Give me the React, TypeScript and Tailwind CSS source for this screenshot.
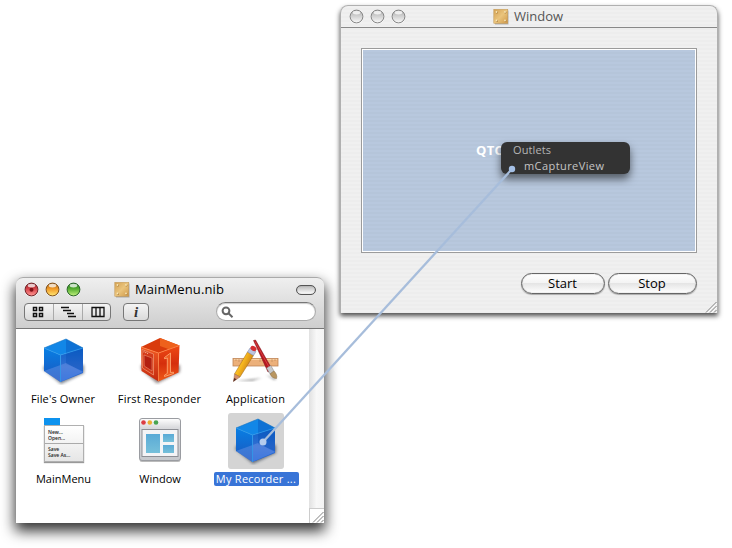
import React from "react";

const font = "font-['Open_Sans','Noto_Sans',sans-serif]";

function NibIcon({ className = "" }: { className?: string }) {
  return (
    <svg className={className} width="16" height="16" viewBox="0 0 16 16">
      <defs>
        <linearGradient id="nib" x1="0" y1="0" x2="1" y2="1">
          <stop offset="0" stopColor="#d3a052" />
          <stop offset="0.5" stopColor="#eac47c" />
          <stop offset="1" stopColor="#cf9848" />
        </linearGradient>
      </defs>
      <rect x="2" y="1.5" width="13.5" height="14" fill="#000" opacity=".25" />
      <rect x="0.8" y="0.3" width="14" height="14" fill="url(#nib)" stroke="#c09552" strokeWidth=".5" />
      {[3.5, 12].map((x) =>
        [3, 11.5].map((y) => (
          <g key={`${x}-${y}`}>
            <circle cx={x + 0.4} cy={y + 0.5} r="1.1" fill="#a97a38" />
            <circle cx={x} cy={y} r=".9" fill="#fbe9b8" />
          </g>
        ))
      )}
    </svg>
  );
}

function Light({ id, top, mid, low, edge, dot }: { id: string; top: string; mid: string; low: string; edge: string; dot?: boolean }) {
  return (
    <svg width="15" height="15" viewBox="0 0 15 15" className="block">
      <defs>
        <linearGradient id={id} x1="0" y1="0" x2="0" y2="1">
          <stop offset="0" stopColor={top} />
          <stop offset=".45" stopColor={mid} />
          <stop offset="1" stopColor={low} />
        </linearGradient>
      </defs>
      <circle cx="7.5" cy="8" r="6.8" fill="#fff" opacity=".8" />
      <circle cx="7.5" cy="7.5" r="6.4" fill={`url(#${id})`} stroke={edge} strokeWidth="1" />
      <ellipse cx="7.5" cy="3.6" rx="3.8" ry="1.9" fill="#fff" opacity=".75" />
      {dot && <circle cx="7.5" cy="7.7" r="2" fill="#7f1016" />}
    </svg>
  );
}

function Grip() {
  return (
    <svg width="12" height="12" viewBox="0 0 12 12" className="block">
      <path d="M1 11.5 11.5 1M5 11.5 11.5 5M9 11.5 11.5 9" stroke="#7c7c7c" strokeWidth="1" />
      <path d="M2.2 11.7 11.7 2.2M6.2 11.7 11.7 6.2" stroke="#fff" strokeWidth=".8" />
    </svg>
  );
}

function BlueCube() {
  return (
    <svg width="48" height="48" viewBox="0 0 48 48">
      <defs>
        <linearGradient id="bl" x1="0" y1="0" x2="0" y2="1">
          <stop offset="0" stopColor="#087fe4" />
          <stop offset="1" stopColor="#1b55bd" />
        </linearGradient>
        <linearGradient id="br" x1="0" y1="0" x2="0" y2="1">
          <stop offset="0" stopColor="#0b62ca" />
          <stop offset=".55" stopColor="#336fd2" />
          <stop offset="1" stopColor="#1761d8" />
        </linearGradient>
        <filter id="bs" x="-20%" y="-20%" width="140%" height="140%"><feGaussianBlur stdDeviation="1.6" /></filter>
      </defs>
      <path d="M3 32 21 47 44 36V28H5z" fill="#263342" opacity=".6" filter="url(#bs)" />
      <path d="M4 11 26 2 43 11 20.500 18z" fill="#1287e7" />
      <path d="M4 11 20.500 18V45L4 34z" fill="url(#bl)" />
      <path d="M20.500 18 43 11V36L20.500 45z" fill="url(#br)" />
      <path d="M26 2 43 11V34L26 27z" fill="#0750b5" opacity=".38" />
      <path d="M4 34 26 26 43 35 20.500 45z" fill="#7d9fea" opacity=".38" />
      <path d="M4 11 20.500 18V45M20.500 18 43 11" fill="none" stroke="#2c9aec" strokeWidth=".8" />
      <path d="M4 11 26 2 43 11" fill="none" stroke="#1674c3" strokeWidth=".6" />
    </svg>
  );
}

function RedCube() {
  return (
    <svg width="48" height="48" viewBox="0 0 48 48">
      <defs>
        <linearGradient id="rl" x1="0" y1="0" x2="0" y2="1">
          <stop offset="0" stopColor="#f05a23" />
          <stop offset="1" stopColor="#c42a10" />
        </linearGradient>
        <linearGradient id="rr" x1="0" y1="0" x2="0" y2="1">
          <stop offset="0" stopColor="#ee4a14" />
          <stop offset=".5" stopColor="#d52f0c" />
          <stop offset="1" stopColor="#ef5a18" />
        </linearGradient>
        <filter id="rs" x="-20%" y="-20%" width="140%" height="140%"><feGaussianBlur stdDeviation="1.4" /></filter>
      </defs>
      <path d="M5 32 21 46.500 44 35V28H5z" fill="#3a2421" opacity=".55" filter="url(#rs)" />
      <path d="M5 10 24 1 43.500 8.500 22.500 16z" fill="#d93b0c" />
      <path d="M24 1 43.500 8.500 33 12.200 24 9z" fill="#ee611c" />
      <path d="M5 10 22.500 16V44.500L5.500 34z" fill="url(#rl)" />
      <path d="M22.500 16 43.500 8.500 42.500 35.500 22.500 44.500z" fill="url(#rr)" />
      <path d="M5 10 22.500 16V44M22.500 16 43.500 8.500" stroke="#ff8546" strokeWidth=".8" fill="none" />
      <path d="M6 12.500 17.500 17V38L6.500 31z" fill="#d33a1a" stroke="#f09c78" strokeWidth=".7" />
      <path d="M8 18 16 21V34L8.200 29z" fill="#b32010" stroke="#ee9270" strokeWidth=".6" />
      <path d="M7.500 14.700 12 16.500" stroke="#ffd0ad" strokeWidth="1.100" strokeDasharray="1 1" />
      <path d="M28.500 20.500 34.500 16V35.500L37.500 35.200V36.500L28.500 39.500V38.200L31.300 36.500V21L28.500 21.700z" fill="#ee5a20" stroke="#ffb078" strokeWidth=".8" />
    </svg>
  );
}

function AppIcon() {
  return (
    <svg width="48" height="48" viewBox="0 0 48 48">
      <defs>
        <linearGradient id="pen" x1="0" y1="0" x2="1" y2=".6">
          <stop offset="0" stopColor="#ffdf63" />
          <stop offset=".5" stopColor="#f8b91e" />
          <stop offset="1" stopColor="#b96911" />
        </linearGradient>
        <filter id="as"><feGaussianBlur stdDeviation=".8" /></filter>
      </defs>
      <path d="M4 44 30 41 20 44zM34 38 45 42 42 43z" fill="#555" opacity=".55" filter="url(#as)" />
      <rect x="1" y="21.500" width="45" height="7.500" fill="#ecb07a" stroke="#c08556" strokeWidth=".8" />
      <path d="M2 22.500H45" stroke="#f8cfa1" strokeWidth="1" />
      <path d="M4 22v2M7 22v3M10 22v2M13 22v3M28 22v3M31 22v2M40 22v3M43 22v2" stroke="#b98355" strokeWidth=".6" />
      <path d="M21.500 3.500 23.500 3 40.500 33 36 35z" fill="#b7161f" stroke="#791017" strokeWidth=".5" />
      <path d="M23 4.500 37 30" stroke="#e0504e" strokeWidth=".7" />
      <path d="M34.500 31 38.800 28.500 42 34 38 37z" fill="#c7c9cc" stroke="#777" strokeWidth=".4" />
      <path d="M38 37 42 34C44 36 45.500 39 44.500 41.500C41.500 41.500 39 39.500 38 37z" fill="#b99660" stroke="#846940" strokeWidth=".5" />
      <path d="M15.500 15 21.500 18.500 8 40 2.500 37z" fill="url(#pen)" stroke="#9e6412" strokeWidth=".5" />
      <path d="M2.500 37 8 40 1.500 44.500z" fill="#d6906a" stroke="#8f6040" strokeWidth=".4" />
      <path d="M2.200 41 4.500 42.300 1.200 44.800z" fill="#522b26" />
      <path d="M15.500 15 18 11 24 14.500 21.500 18.500z" fill="#bac4e0" stroke="#7c84a8" strokeWidth=".5" />
      <ellipse cx="21.500" cy="11.500" rx="3.200" ry="2.400" fill="#d42d31" transform="rotate(30 21.500 11.500)" />
    </svg>
  );
}

function MenuIcon() {
  return (
    <div className="flex h-[46px] w-10 flex-col">
      <div className="h-[7px] w-4 shrink-0 bg-[#0d92ee]" />
      <div className="flex h-[37px] flex-col border border-[#b0b0b0] bg-linear-to-b from-white to-[#e6e6e6] pt-[3px] text-[5px] leading-[6px] font-semibold text-[#222] shadow-[0_1px_1px_#999]">
        <span className="pl-[3px]">New...</span>
        <span className="border-b border-[#aaa] pb-0.5 pl-[3px]">Open...</span>
        <span className="pt-0.5 pl-[3px]">Save</span>
        <span className="pl-[3px]">Save As...</span>
      </div>
    </div>
  );
}

function WindowIcon() {
  return (
    <svg width="48" height="48" viewBox="0 0 48 48">
      <defs>
        <linearGradient id="wf" x1="0" y1="0" x2="0" y2="1">
          <stop offset="0" stopColor="#fff" /><stop offset=".22" stopColor="#d9dadd" /><stop offset="1" stopColor="#c6c8cc" />
        </linearGradient>
        <linearGradient id="wp" x1="0" y1="0" x2="0" y2="1">
          <stop offset="0" stopColor="#5aaad6" /><stop offset="1" stopColor="#76c0da" />
        </linearGradient>
      </defs>
      <rect x="3.500" y="2" width="41" height="43" rx="2.500" fill="#777" opacity=".5" />
      <rect x="3.500" y="1.500" width="41" height="42" rx="2.500" fill="url(#wf)" stroke="#9a9ca1" />
      <circle cx="7.500" cy="5.500" r="2.300" fill="#dc3d43" /><circle cx="13.800" cy="5.500" r="2.300" fill="#edae32" /><circle cx="20" cy="5.500" r="2.300" fill="#48a551" />
      <rect x="6" y="12.500" width="36" height="27" fill="#f4f4f6" stroke="#8d8f95" />
      <rect x="10" y="17" width="14" height="19" fill="url(#wp)" />
      <rect x="27" y="17" width="11" height="8" fill="url(#wp)" />
      <rect x="27" y="28" width="11" height="8" fill="url(#wp)" />
    </svg>
  );
}

function Item({ label, children, selected, spacing = "" }: { label: string; children: React.ReactNode; selected?: boolean; spacing?: string }) {
  return (
    <div className="flex h-20 flex-col items-center">
      <div className={`flex size-14 items-center justify-center rounded-[3px] ${selected ? "bg-[#d4d4d4]" : ""}`}>{children}</div>
      <div className={`mt-[3px] flex h-3.5 items-center justify-center whitespace-nowrap text-[11px] leading-[14px] ${spacing} ${selected ? "w-[85px] rounded-[2px] bg-[#3874d7] text-white" : "text-black"}`}>
        {label}
      </div>
    </div>
  );
}

function PushButton({ label, width }: { label: string; width: string }) {
  return (
    <button className={`${width} flex h-[21px] items-start justify-center rounded-full border border-[#666] bg-[linear-gradient(#fff_0%,#f4f4f4_45%,#e5e5e5_50%,#fff_100%)] pr-px text-[13px] leading-[19px] text-black shadow-[inset_0_0_1px_#777,0_1px_1px_#aaa]`}>
      {label}
    </button>
  );
}

function DesignWindow() {
  return (
    <section className="absolute left-[340px] top-[5px] flex h-[308px] w-[378px] flex-col rounded-t-[8px] border-x border-t border-[#b0b0b0] bg-[repeating-linear-gradient(#f0f0f0_0px,#f0f0f0_2px,#ededed_2px,#ededed_4px)] shadow-[0_3px_5px_rgba(0,0,0,.7)]">
      <header className="flex h-[22px] shrink-0 items-center border-b border-[#888] pl-2">
        <div className="flex w-[144px] gap-1.5">
          {["g1", "g2", "g3"].map((id) => (
            <Light key={id} id={id} top="#aaa" mid="#cfcfcf" low="#fafafa" edge="#858585" />
          ))}
        </div>
        <NibIcon />
        <h1 className="ml-[5px] pt-px text-[13px] text-[#555]">Window</h1>
      </header>
      <div className="mx-5 mt-5 flex h-[205px] shrink-0 border border-[#9b9b9b]">
        <div className="flex size-full items-center border border-white bg-[repeating-linear-gradient(#b8c8de_0px,#b8c8de_2px,#b5c5da_2px,#b5c5da_4px)] pl-[113px]">
          <span className="text-[13px] font-bold tracking-[0.3px] text-white">QTC</span>
        </div>
      </div>
      <div className="mr-[20px] mt-5 flex justify-end gap-[3px]">
        <PushButton label="Start" width="w-[84px]" />
        <PushButton label="Stop" width="w-[89px]" />
      </div>
      <div className="mt-auto flex justify-end"><Grip /></div>
    </section>
  );
}

function NibWindow() {
  return (
    <section className="absolute left-4 top-[277px] flex h-[246px] w-[308px] flex-col rounded-t-[7px] bg-white shadow-[0_7px_14px_1px_rgba(0,0,0,.8)]">
      <header className="flex h-[52px] shrink-0 flex-col rounded-t-[7px] border-b border-[#777] border-t border-t-[#aaa] bg-linear-to-b from-[#efefef] to-[#cecece]">
        <div className="flex h-[23px] items-center pl-2 pr-2">
          <div className="flex w-[90px] gap-1.5">
            <Light id="red" top="#8d2025" mid="#d8444a" low="#ff9995" edge="#6e2428" dot />
            <Light id="amber" top="#a66217" mid="#f39b28" low="#ffe974" edge="#80501b" />
            <Light id="green" top="#277925" mid="#55ae31" low="#c3f27f" edge="#286328" />
          </div>
          <NibIcon />
          <h1 className="ml-[5px] text-[13px] tracking-[0.1px] text-black">MainMenu.nib</h1>
          <div className="ml-auto h-[10px] w-5 rounded-full border border-[#555] bg-linear-to-b from-[#bbb] to-white shadow-[inset_0_0_1px_#777]" />
        </div>
        <div className="flex items-start pl-2 pr-2 pt-[2px]">
          <div className="flex h-[18px] w-[87px] rounded-[4px] border border-[#777] bg-linear-to-b from-[#f4f4f4] to-[#dadada]">
            <svg width="85" height="16" viewBox="0 0 85 16">
              <path d="M28.500 0V16M57.500 0V16" stroke="#aaa" />
              <g fill="none" stroke="#111" strokeWidth="1.500">
                <path d="M8.500 3.500h3v3h-3zM14.500 3.500h3v3h-3zM8.500 9.500h3v3h-3zM14.500 9.500h3v3h-3z" />
                <path d="M36 3.500h8M38 6.500h8M42 9.500h7M43 12.500h8" strokeWidth="1.400" />
                <path d="M67 3.500h12v9H67zM71 3.500v9M75 3.500v9" strokeWidth="1.300" />
              </g>
            </svg>
          </div>
          <div className="ml-3 flex h-[18px] w-[26px] items-center justify-center rounded-[4px] border border-[#777] bg-linear-to-b from-[#f4f4f4] to-[#dadada] font-['Liberation_Serif',serif] text-[15px] leading-4 font-bold italic text-[#333]">i</div>
          <div className="-mt-px ml-auto h-[19px] w-[100px] rounded-full border border-[#aaa] border-t-[#777] bg-white pl-1 pt-[3px] shadow-[inset_0_1px_1px_#ccc]">
            <svg width="13" height="13" viewBox="0 0 13 13" fill="none" stroke="#666" strokeWidth="2">
              <circle cx="5" cy="4.800" r="3.400" /><path d="M7.500 7.300 11.500 11.300" />
            </svg>
          </div>
        </div>
      </header>
      <div className="flex min-h-0 flex-1">
        <div className="mr-[5px] grid w-[288px] shrink-0 grid-cols-[96px_96px_96px] content-start pt-1">
          <Item label="File's Owner" spacing="tracking-[0.15px] pr-0.5"><BlueCube /></Item>
          <Item label="First Responder" spacing="tracking-[0.18px] pr-px"><RedCube /></Item>
          <Item label="Application" spacing="tracking-[0.15px] pr-px"><AppIcon /></Item>
          <Item label="MainMenu" spacing="pr-px"><MenuIcon /></Item>
          <Item label="Window"><WindowIcon /></Item>
          <Item label="My Recorder ..." spacing="tracking-[0.25px]" selected><BlueCube /></Item>
        </div>
        <div className="flex w-[15px] shrink-0 flex-col justify-end bg-linear-to-r from-[#e1e1e1] via-[#f8f8f8] to-[#f4f4f4]">
          <div className="flex h-[15px] items-end justify-end border-l border-t border-[#ccc] bg-white"><Grip /></div>
        </div>
      </div>
    </section>
  );
}

export default function App() {
  return (
    <main className={`relative h-[548px] w-[732px] overflow-hidden bg-white ${font}`}>
      <DesignWindow />
      <aside className="absolute left-[501px] top-[142px] flex h-8 w-[129px] flex-col rounded-[6px] bg-[#333] pl-3 shadow-[0_5px_9px_rgba(0,0,0,.55)]">
        <span className="text-[11px] leading-4 tracking-[0.1px] text-[#b5b5b5]">Outlets</span>
        <span className="pl-[11px] text-[11px] leading-4 tracking-[0.42px] text-[#c5c5c5]">mCaptureView</span>
      </aside>
      <NibWindow />
      <svg className="pointer-events-none absolute inset-0" width="732" height="548">
        <path d="M263 442 512 169" stroke="#a7bddb" strokeWidth="2.300" />
        <circle cx="263" cy="442" r="3.500" fill="#b5cced" />
        <circle cx="512" cy="169" r="3.200" fill="#a5c0e6" />
      </svg>
    </main>
  );
}
